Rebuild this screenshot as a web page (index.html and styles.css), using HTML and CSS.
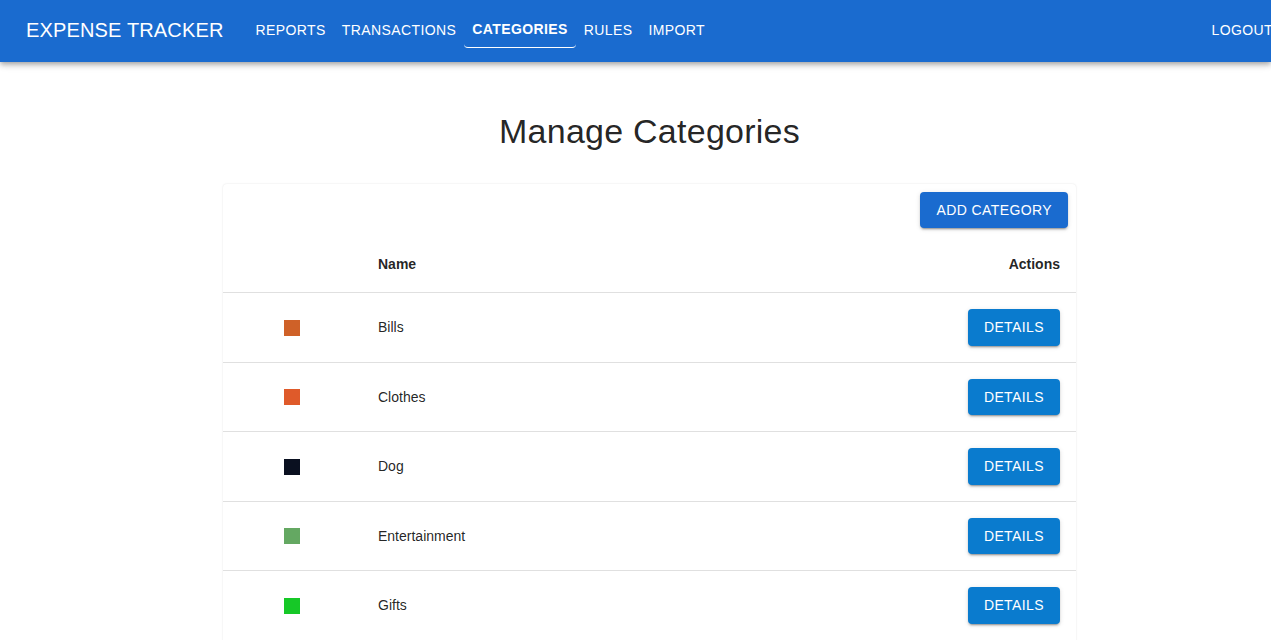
FILE: index.html
```html
<!DOCTYPE html>
<html lang="en">
<head>
<meta charset="utf-8">
<title>Expense Tracker - Categories</title>
<link rel="stylesheet" href="styles.css">
</head>
<body>
<header class="appbar">
  <div class="toolbar">
    <div class="brand">EXPENSE TRACKER</div>
    <nav class="nav">
      <a class="nav-btn">Reports</a>
      <a class="nav-btn">Transactions</a>
      <a class="nav-btn active">Categories</a>
      <a class="nav-btn">Rules</a>
      <a class="nav-btn">Import</a>
    </nav>
    <a class="nav-btn logout">Logout</a>
  </div>
</header>
<main class="page">
  <h1 class="title">Manage Categories</h1>
  <section class="card">
    <div class="card-toolbar">
      <button class="btn btn-primary">Add Category</button>
    </div>
    <div class="table">
      <div class="row head">
        <div class="cell"></div>
        <div class="cell">Name</div>
        <div class="cell right">Actions</div>
      </div>
      <div class="row">
        <div class="cell swatch-cell"><span class="swatch swatch-bills"></span></div>
        <div class="cell">Bills</div>
        <div class="cell right"><button class="btn btn-info">Details</button></div>
      </div>
      <div class="row">
        <div class="cell swatch-cell"><span class="swatch swatch-clothes"></span></div>
        <div class="cell">Clothes</div>
        <div class="cell right"><button class="btn btn-info">Details</button></div>
      </div>
      <div class="row">
        <div class="cell swatch-cell"><span class="swatch swatch-dog"></span></div>
        <div class="cell">Dog</div>
        <div class="cell right"><button class="btn btn-info">Details</button></div>
      </div>
      <div class="row">
        <div class="cell swatch-cell"><span class="swatch swatch-ent"></span></div>
        <div class="cell">Entertainment</div>
        <div class="cell right"><button class="btn btn-info">Details</button></div>
      </div>
      <div class="row">
        <div class="cell swatch-cell"><span class="swatch swatch-gifts"></span></div>
        <div class="cell">Gifts</div>
        <div class="cell right"><button class="btn btn-info">Details</button></div>
      </div>
    </div>
  </section>
</main>
</body>
</html>
```

FILE: styles.css
```css
* { box-sizing: border-box; }

html, body {
  margin: 0;
  padding: 0;
  background: #ffffff;
  font-family: "Liberation Sans", Arial, Helvetica, sans-serif;
  color: rgba(0, 0, 0, 0.87);
  overflow: hidden;
}

.appbar {
  position: relative;
  z-index: 2;
  background: #1a6bcf;
  color: #ffffff;
  box-shadow: 0 2px 4px -1px rgba(0,0,0,0.2), 0 4px 5px 0 rgba(0,0,0,0.14), 0 1px 10px 0 rgba(0,0,0,0.12);
}

.toolbar {
  height: 62px;
  display: flex;
  align-items: center;
  padding: 0 0 2px 26px;
}

.brand {
  font-size: 20px;
  line-height: 32px;
  letter-spacing: 0.15px;
  margin-right: 24px;
  white-space: nowrap;
}

.nav {
  display: flex;
  align-items: center;
}

.nav-btn {
  display: inline-flex;
  align-items: center;
  height: 36px;
  padding: 0 8px;
  font-size: 14px;
  letter-spacing: 0.4px;
  text-transform: uppercase;
  color: #ffffff;
  white-space: nowrap;
  cursor: pointer;
  border-bottom: 1px solid transparent;
  border-radius: 4px;
}

.nav-btn.active {
  font-weight: 700;
  padding: 0 8px 2px;
  border-bottom: 1px solid #ffffff;
}

.logout {
  margin-left: auto;
  margin-right: -2px;
  padding-right: 0;
}

.page {
  display: flex;
  flex-direction: column;
  align-items: center;
  padding-left: 28px;
}

.title {
  margin: 48px 0 32px;
  font-size: 34px;
  font-weight: 400;
  line-height: 42px;
  letter-spacing: 0.25px;
}

.card {
  width: 853px;
  min-height: 520px;
  background: #ffffff;
  border-radius: 4px;
  box-shadow: 0 0 2px 0 rgba(0,0,0,0.12);
}

.card-toolbar {
  display: flex;
  justify-content: flex-end;
  padding: 8px 8px;
}

.btn {
  font-family: "Liberation Sans", Arial, Helvetica, sans-serif;
  font-size: 14px;
  letter-spacing: 0.4px;
  text-transform: uppercase;
  color: #ffffff;
  border: 0;
  border-radius: 4px;
  padding: 0 16px;
  cursor: pointer;
  box-shadow: 0 3px 1px -2px rgba(0,0,0,0.2), 0 2px 2px 0 rgba(0,0,0,0.14), 0 1px 5px 0 rgba(0,0,0,0.12);
}

.btn-primary {
  background: #1a6bcf;
  height: 36px;
}

.btn-info {
  background: #0a7bce;
  height: 36.5px;
}

.table {
  display: flex;
  flex-direction: column;
}

.row {
  display: grid;
  grid-template-columns: 139px 355px 1fr;
  border-bottom: 1px solid #e0e0e0;
}

.cell {
  padding: 16px;
  font-size: 14px;
  line-height: 20px;
  display: flex;
  align-items: center;
  min-height: 20px;
}

.head .cell {
  font-weight: 700;
  line-height: 24px;
}

.cell.right { justify-content: flex-end; }

.swatch-cell {
  padding-left: 61px;
  padding-top: 17px;
}

.swatch {
  display: block;
  width: 16px;
  height: 16px;
}

.swatch-bills { background: #cf6128; }
.swatch-clothes { background: #df5a2a; }
.swatch-dog { background: #0a1020; }
.swatch-ent { background: #64a862; }
.swatch-gifts { background: #16c827; }
```
